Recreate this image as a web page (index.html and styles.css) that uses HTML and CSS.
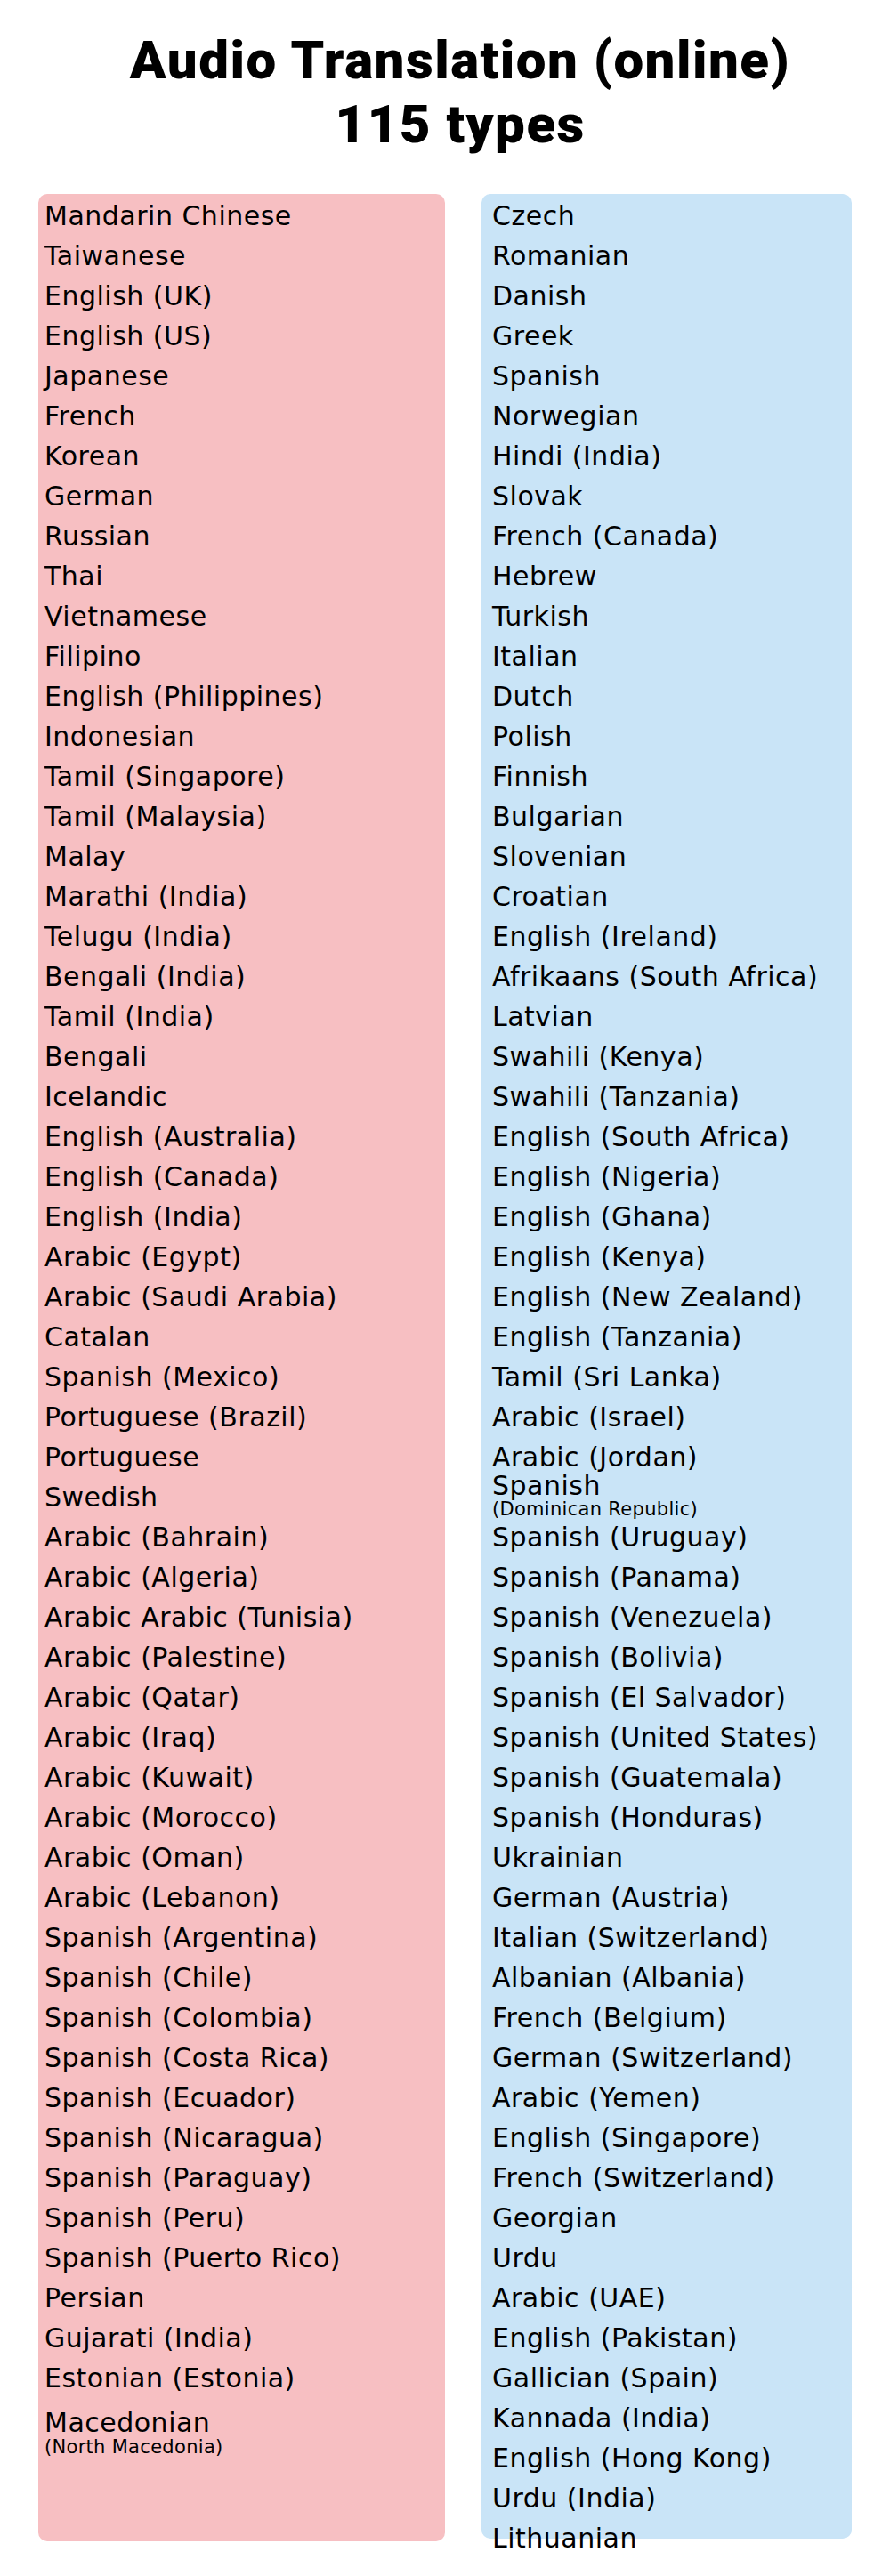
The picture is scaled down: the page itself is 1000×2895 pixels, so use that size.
FILE: index.html
```html
<!DOCTYPE html>
<html lang="en">
<head>
<meta charset="utf-8">
<title>Audio Translation (online) 115 types</title>
<link rel="stylesheet" href="styles.css">
</head>
<body>
<h1 class="title">Audio Translation (online)<br>115 types</h1>
<div class="columns">
  <ul class="list list-pink">
    <li>Mandarin Chinese</li>
    <li>Taiwanese</li>
    <li>English (UK)</li>
    <li>English (US)</li>
    <li>Japanese</li>
    <li>French</li>
    <li>Korean</li>
    <li>German</li>
    <li>Russian</li>
    <li>Thai</li>
    <li>Vietnamese</li>
    <li>Filipino</li>
    <li>English (Philippines)</li>
    <li>Indonesian</li>
    <li>Tamil (Singapore)</li>
    <li>Tamil (Malaysia)</li>
    <li>Malay</li>
    <li>Marathi (India)</li>
    <li>Telugu (India)</li>
    <li>Bengali (India)</li>
    <li>Tamil (India)</li>
    <li>Bengali</li>
    <li>Icelandic</li>
    <li>English (Australia)</li>
    <li>English (Canada)</li>
    <li>English (India)</li>
    <li>Arabic (Egypt)</li>
    <li>Arabic (Saudi Arabia)</li>
    <li>Catalan</li>
    <li>Spanish (Mexico)</li>
    <li>Portuguese (Brazil)</li>
    <li>Portuguese</li>
    <li>Swedish</li>
    <li>Arabic (Bahrain)</li>
    <li>Arabic (Algeria)</li>
    <li>Arabic Arabic (Tunisia)</li>
    <li>Arabic (Palestine)</li>
    <li>Arabic (Qatar)</li>
    <li>Arabic (Iraq)</li>
    <li>Arabic (Kuwait)</li>
    <li>Arabic (Morocco)</li>
    <li>Arabic (Oman)</li>
    <li>Arabic (Lebanon)</li>
    <li>Spanish (Argentina)</li>
    <li>Spanish (Chile)</li>
    <li>Spanish (Colombia)</li>
    <li>Spanish (Costa Rica)</li>
    <li>Spanish (Ecuador)</li>
    <li>Spanish (Nicaragua)</li>
    <li>Spanish (Paraguay)</li>
    <li>Spanish (Peru)</li>
    <li>Spanish (Puerto Rico)</li>
    <li>Persian</li>
    <li>Gujarati (India)</li>
    <li>Estonian (Estonia)</li>
    <li class="item-two item-mk"><span class="main">Macedonian</span><span class="sub">(North Macedonia)</span></li>
  </ul>
  <ul class="list list-blue">
    <li>Czech</li>
    <li>Romanian</li>
    <li>Danish</li>
    <li>Greek</li>
    <li>Spanish</li>
    <li>Norwegian</li>
    <li>Hindi (India)</li>
    <li>Slovak</li>
    <li>French (Canada)</li>
    <li>Hebrew</li>
    <li>Turkish</li>
    <li>Italian</li>
    <li>Dutch</li>
    <li>Polish</li>
    <li>Finnish</li>
    <li>Bulgarian</li>
    <li>Slovenian</li>
    <li>Croatian</li>
    <li>English (Ireland)</li>
    <li>Afrikaans (South Africa)</li>
    <li>Latvian</li>
    <li>Swahili (Kenya)</li>
    <li>Swahili (Tanzania)</li>
    <li>English (South Africa)</li>
    <li>English (Nigeria)</li>
    <li>English (Ghana)</li>
    <li>English (Kenya)</li>
    <li>English (New Zealand)</li>
    <li>English (Tanzania)</li>
    <li>Tamil (Sri Lanka)</li>
    <li>Arabic (Israel)</li>
    <li>Arabic (Jordan)</li>
    <li class="item-two item-do"><span class="main">Spanish</span><span class="sub">(Dominican Republic)</span></li>
    <li>Spanish (Uruguay)</li>
    <li>Spanish (Panama)</li>
    <li>Spanish (Venezuela)</li>
    <li>Spanish (Bolivia)</li>
    <li>Spanish (El Salvador)</li>
    <li>Spanish (United States)</li>
    <li>Spanish (Guatemala)</li>
    <li>Spanish (Honduras)</li>
    <li>Ukrainian</li>
    <li>German (Austria)</li>
    <li>Italian (Switzerland)</li>
    <li>Albanian (Albania)</li>
    <li>French (Belgium)</li>
    <li>German (Switzerland)</li>
    <li>Arabic (Yemen)</li>
    <li>English (Singapore)</li>
    <li>French (Switzerland)</li>
    <li>Georgian</li>
    <li>Urdu</li>
    <li>Arabic (UAE)</li>
    <li>English (Pakistan)</li>
    <li>Gallician (Spain)</li>
    <li>Kannada (India)</li>
    <li>English (Hong Kong)</li>
    <li>Urdu (India)</li>
    <li>Lithuanian</li>
  </ul>
</div>
</body>
</html>
```

FILE: styles.css
```css
html, body {
  margin: 0;
  padding: 0;
  background: #ffffff;
}

body {
  font-family: "DejaVu Sans", "Noto Sans", sans-serif;
  color: #000000;
}

.title {
  margin: 32px 0 0;
  padding-left: 34px;
  text-align: center;
  font-family: Roboto, "Liberation Sans", sans-serif;
  font-weight: 900;
  font-size: 60px;
  line-height: 72px;
  letter-spacing: 1.5px;
}

.columns {
  display: grid;
  grid-template-columns: 457px 416px;
  column-gap: 41px;
  padding: 42px 43px 39px;
  align-items: start;
}

.list {
  list-style: none;
  margin: 0;
  box-sizing: border-box;
  padding: 2px 0 0 7px;
  border-radius: 10px;
  font-size: 30px;
  line-height: 45px;
  letter-spacing: 0.5px;
}

.list-pink {
  background: #f7bfc2;
  height: 2638px;
}

.list-blue {
  background: #c9e4f7;
  height: 2635px;
  padding-left: 12px;
}

.list li {
  height: 45px;
  white-space: nowrap;
}

.item-two .main,
.item-two .sub {
  display: block;
}

.item-two .sub {
  font-size: 21px;
  letter-spacing: 0.3px;
}

.item-do .main {
  line-height: 19px;
}

.item-do .sub {
  line-height: 34px;
}

.item-mk {
  padding-top: 12px;
}

.item-mk .main {
  line-height: 31px;
}

.item-mk .sub {
  line-height: 24px;
}
```
